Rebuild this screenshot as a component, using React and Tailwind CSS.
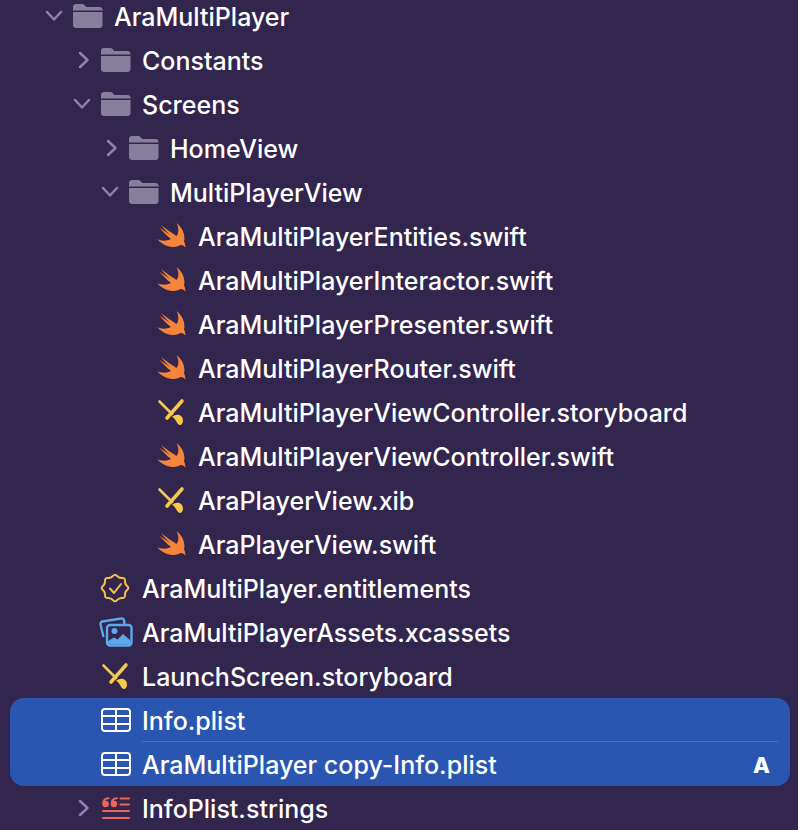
import React from "react";

const FolderIcon = () => (
  <svg width="30" height="24" viewBox="0 0 30 24" className="shrink-0">
    <path d="M0 6.500V3a3 3 0 0 1 3-3h6c1.500 0 2.200.6 3 1.500L13.200 3H26.500a3 3 0 0 1 3 3v.5z" fill="#86809c" />
    <path d="M0 8h29.500v13a3 3 0 0 1-3 3H3a3 3 0 0 1-3-3z" fill="#86809c" />
  </svg>
);

const SwiftIcon = () => (
  <svg width="30" height="26" viewBox="0 1 30 26" className="shrink-0">
    <path
      d="M0 17C4 21 9 25 16 25C20 25 22 23.500 24 23C26 23 27 24 28.500 25.500C28 22 28 21 27 19.500C28.500 14 26 6 19.500 1C22 6 22 11 19.500 14C15 11 9 7 4 3C7 7 10 10 13 13C10 11 6 8 2.500 5.500C6 10 10 14 14 17C9 19.500 4 19 0 17Z"
      fill="#f5853b"
    />
  </svg>
);

const StoryboardIcon = () => (
  <svg width="30" height="32" viewBox="0 0 30 32" className="shrink-0">
    <path d="M2.500 5.500L15 18" stroke="#f6c84c" strokeWidth="2.600" strokeLinecap="round" />
    <path d="M25 5L10 22" stroke="#f6c84c" strokeWidth="3.600" strokeLinecap="round" />
    <path d="M15 20.500C18 19 21 17.500 24 20C27 22.500 26.500 28 23.500 29C20 29.500 20 24 15 20.500Z" fill="#f6c84c" />
  </svg>
);

// eight lobed seal, smoothed between the outer and inner points
const sealPoints = Array.from({ length: 16 }, (_, i) => {
  const r = i % 2 === 0 ? 14.500 : 10.500;
  const a = (Math.PI * 2 * i) / 16 - Math.PI / 2;
  return [15 + r * Math.cos(a), 16 + r * Math.sin(a)];
});
const mid = (a, b) => `${((a[0] + b[0]) / 2).toFixed(2)} ${((a[1] + b[1]) / 2).toFixed(2)}`;
const sealPath =
  sealPoints
    .map((p, i) => {
      const n = sealPoints[(i + 1) % 16];
      return i === 0 ? `M${mid(p, n)}` : `Q${p[0].toFixed(2)} ${p[1].toFixed(2)} ${mid(p, n)}`;
    })
    .join("") +
  `Q${sealPoints[0][0].toFixed(2)} ${sealPoints[0][1].toFixed(2)} ${mid(sealPoints[0], sealPoints[1])}Z`;

const EntitlementsIcon = () => (
  <svg width="32" height="32" viewBox="0 0 32 32" className="shrink-0" fill="none" stroke="#f3c04a" strokeWidth="2" strokeLinecap="round" strokeLinejoin="round">
    <path d={sealPath} />
    <path d="M10 16.500L14 21L21 12" />
  </svg>
);

const AssetsIcon = () => (
  <svg width="34" height="30" viewBox="0 0 34 30" className="shrink-0">
    <path d="M4.500 20L1.500 7.500a2.500 2.500 0 0 1 2-3L22 1.500a2.500 2.500 0 0 1 3 2L25.500 7" fill="none" stroke="#5ba8ea" strokeWidth="2.400" />
    <rect x="8" y="8" width="24.500" height="20.500" rx="3" fill="none" stroke="#5ba8ea" strokeWidth="2.400" />
    <circle cx="15.500" cy="14" r="3" fill="#5ba8ea" />
    <path d="M9 27.500V24L15 20.500L18.500 22.500L24 17L31.500 23.500V27.500z" fill="#5ba8ea" />
  </svg>
);

const TableIcon = () => (
  <svg width="30" height="24" viewBox="0 0 30 24" className="shrink-0" fill="none" stroke="#ffffff" strokeWidth="2">
    <rect x="1" y="1" width="28" height="22" rx="3" />
    <path d="M1 8H29M1 16H29M15 1V23" />
  </svg>
);

const StringsIcon = () => (
  <svg width="28" height="22" viewBox="0 0 28 22" className="shrink-0">
    <circle cx="3.600" cy="7" r="3.200" fill="#ec6756" />
    <path d="M1.300 6.500C1.300 3.500 3.500 1.500 6.500 1.300" fill="none" stroke="#ec6756" strokeWidth="1.900" strokeLinecap="round" />
    <circle cx="12" cy="7" r="3.200" fill="#ec6756" />
    <path d="M9.700 6.500C9.700 3.500 11.900 1.500 14.900 1.300" fill="none" stroke="#ec6756" strokeWidth="1.900" strokeLinecap="round" />
    <path d="M18.500 1.500H27M18.500 7.500H27M1 14H27M1 21H27" stroke="#ec6756" strokeWidth="2" strokeLinecap="round" />
  </svg>
);

const Chevron = ({ dir }) =>
  dir === "down" ? (
    <svg width="18" height="12" viewBox="0 0 18 12" className="shrink-0" fill="none" stroke="#8f80b3" strokeWidth="2.500" strokeLinecap="round" strokeLinejoin="round">
      <path d="M2 2L9 9.500L16 2" />
    </svg>
  ) : (
    <svg width="12" height="18" viewBox="0 0 12 18" className="ml-[5px] shrink-0" fill="none" stroke="#8f80b3" strokeWidth="2.500" strokeLinecap="round" strokeLinejoin="round">
      <path d="M2 2L9.500 9L2 16" />
    </svg>
  );

const icons = {
  folder: <FolderIcon />,
  swift: <SwiftIcon />,
  storyboard: <StoryboardIcon />,
  entitlements: <EntitlementsIcon />,
  assets: <AssetsIcon />,
  table: <TableIcon />,
  strings: <StringsIcon />,
};

const rows = [
  { pad: "pl-[45px]", icon: "folder", chevron: "down", name: "AraMultiPlayer" },
  { pad: "pl-[73px]", icon: "folder", chevron: "right", name: "Constants" },
  { pad: "pl-[73px]", icon: "folder", chevron: "down", name: "Screens" },
  { pad: "pl-[101px]", icon: "folder", chevron: "right", name: "HomeView" },
  { pad: "pl-[101px]", icon: "folder", chevron: "down", name: "MultiPlayerView" },
  { pad: "pl-[129px]", icon: "swift", name: "AraMultiPlayerEntities.swift" },
  { pad: "pl-[129px]", icon: "swift", name: "AraMultiPlayerInteractor.swift" },
  { pad: "pl-[129px]", icon: "swift", name: "AraMultiPlayerPresenter.swift" },
  { pad: "pl-[129px]", icon: "swift", name: "AraMultiPlayerRouter.swift" },
  { pad: "pl-[129px]", icon: "storyboard", name: "AraMultiPlayerViewController.storyboard" },
  { pad: "pl-[129px]", icon: "swift", name: "AraMultiPlayerViewController.swift" },
  { pad: "pl-[129px]", icon: "storyboard", name: "AraPlayerView.xib" },
  { pad: "pl-[129px]", icon: "swift", name: "AraPlayerView.swift" },
  { pad: "pl-[73px]", icon: "entitlements", name: "AraMultiPlayer.entitlements" },
  { pad: "pl-[73px]", icon: "assets", name: "AraMultiPlayerAssets.xcassets" },
  { pad: "pl-[73px]", icon: "storyboard", name: "LaunchScreen.storyboard" },
];

function Row({ pad, icon, chevron, name, badge, height = "h-[44px]" }) {
  return (
    <div className={`flex items-center ${height} ${pad}`}>
      <div className="flex w-[28px] shrink-0 items-center">{chevron && <Chevron dir={chevron} />}</div>
      <div className="flex w-[30px] shrink-0 items-center justify-center">{icons[icon]}</div>
      <span className="ml-[11px] pt-[3px] text-[25px] leading-none font-[450] whitespace-nowrap text-white">{name}</span>
      {badge && <span className="mr-[20px] ml-auto pt-[2px] text-[22px] leading-none font-extrabold text-white">{badge}</span>}
    </div>
  );
}

export default function App() {
  return (
    <div className="h-[830px] w-[798px] overflow-hidden bg-[#32254e] font-['Inter',sans-serif]">
      <div className="-mt-[6px] flex flex-col">
        {rows.map((row) => (
          <Row key={row.name} {...row} />
        ))}

        {/* selected rows */}
        <div className="mr-[8px] ml-[10px] flex h-[88px] flex-col rounded-[14px] bg-[#2a56b1]">
          <Row pad="pl-[63px]" icon="table" name="Info.plist" height="h-[43px]" />
          <div className="mr-[12px] ml-[132px] h-px bg-[#4a6fc4]" />
          <Row pad="pl-[63px]" icon="table" name="AraMultiPlayer copy-Info.plist" badge="A" />
        </div>

        <Row pad="pl-[73px]" icon="strings" chevron="right" name="InfoPlist.strings" />
      </div>
    </div>
  );
}
